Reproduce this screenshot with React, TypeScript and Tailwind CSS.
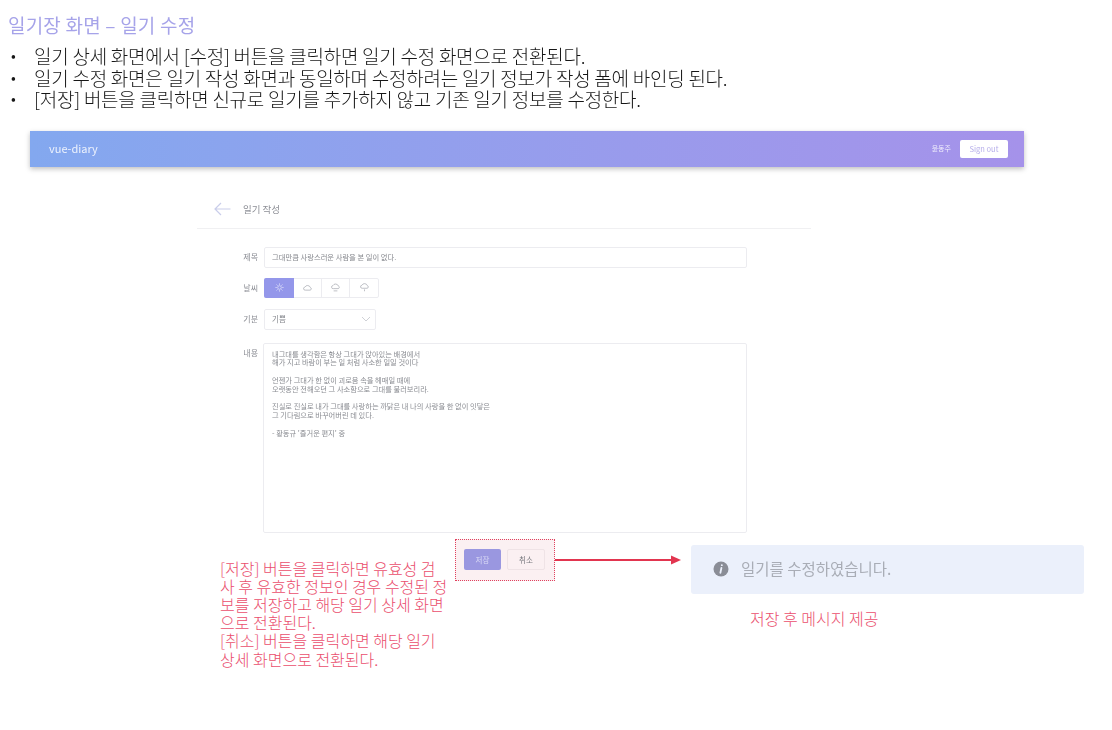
const font = { fontFamily: '"Noto Sans CJK KR", "Noto Sans", sans-serif' };

const bullets = [
  "일기 상세 화면에서 [수정] 버튼을 클릭하면 일기 수정 화면으로 전환된다.",
  "일기 수정 화면은 일기 작성 화면과 동일하며 수정하려는 일기 정보가 작성 폼에 바인딩 된다.",
  "[저장] 버튼을 클릭하면 신규로 일기를 추가하지 않고 기존 일기 정보를 수정한다.",
];

const diary = [
  "내그대를 생각함은 항상 그대가 앉아있는 배경에서",
  "해가 지고 바람이 부는 일 처럼 사소한 일일 것이다",
  "",
  "언젠가 그대가 한 없이 괴로움 속을 헤매일 때에",
  "오랫동안 전해오던 그 사소함으로 그대를 불러보리라.",
  "",
  "진실로 진실로 내가 그대를 사랑하는 까닭은 내 나의 사랑을 한 없이 잇닿은",
  "그 기다림으로 바꾸어버린 데 있다.",
  "",
  "- 황동규 '즐거운 편지' 중",
];

function WeatherIcon({ kind }: { kind: number }) {
  return (
    <svg width="9" height="9" viewBox="0 0 12 12" fill="none" stroke="currentColor" strokeWidth="1">
      {kind === 0 && (
        <>
          <circle cx="6" cy="6" r="2.4" />
          <path d="M6 .5v2M6 9.5v2M.5 6h2M9.5 6h2M2 2l1.5 1.5M8.500 8.500 10 10M2 10l1.500-1.500M8.500 3.500 10 2" />
        </>
      )}
      {kind === 1 && <path d="M3 9.500h6.500a1.800 1.800 0 0 0 .3-3.500A4 4 0 0 0 2.500 5.500 2 2 0 0 0 3 9.500Z" />}
      {kind === 2 && <path d="M3 7.500h6.500a1.800 1.800 0 0 0 .3-3.500A4 4 0 0 0 2.500 3.500 2 2 0 0 0 3 7.500ZM3.500 10.500h5" />}
      {kind === 3 && <path d="M3 7h6.500a1.800 1.800 0 0 0 .3-3.500A4 4 0 0 0 2.500 3 2 2 0 0 0 3 7ZM6 8.500v2.500" />}
    </svg>
  );
}

function FormRow({ label, className, children }: { label: string; className: string; children: React.ReactNode }) {
  return (
    <div className={`flex items-start ${className}`}>
      <span className="w-[67px] pr-[6px] text-right text-[8px] leading-[20px] text-[#8b8d94]">{label}</span>
      {children}
    </div>
  );
}

export default function App() {
  return (
    <div className="h-[730px] w-[1112px] overflow-hidden bg-white" style={font}>
      {/* slide heading */}
      <h1 className="pl-2 pt-[13px] text-[19px] leading-[24px] font-normal tracking-[0.2px] text-[#a6a3e9] blur-[0.3px]">
        일기장 화면 – 일기 수정
      </h1>
      <ul className="mt-[8px] text-[19px] leading-[21.500px] tracking-[-0.250px] text-[#161616] blur-[0.3px]">
        {bullets.map((text) => (
          <li key={text} className="flex">
            <span className="w-[34px] pl-[11px] text-[14px]">•</span>
            <span className="font-light">{text}</span>
          </li>
        ))}
      </ul>

      {/* embedded app screenshot */}
      <div className="ml-[30px] mt-[21px] w-[994px] blur-[0.600px]">
        <header className="flex h-[36px] items-center bg-gradient-to-r from-[#83a8ef] to-[#a592ea] pl-[19px] pr-[16px] shadow-[0_2px_5px_rgba(0,0,0,0.25)]">
          <span className="text-[11px] text-white/85">vue-diary</span>
          <span className="ml-auto mr-[9px] text-[7px] text-white/85">윤동주</span>
          <button className="h-[18px] w-[48px] rounded-[2px] bg-white text-[7.500px] text-[#b6aeea]">Sign out</button>
        </header>

        <main className="ml-[167px] w-[614px]">
          <div className="mt-[35px] flex h-[27px] items-start border-b border-[#f0f0f2] pl-[17px]">
            <svg width="17" height="14" viewBox="0 0 17 14" fill="none" stroke="#c9cdea" strokeWidth="1.200">
              <path d="M16.500 7H1M7 1 1 7l6 6" />
            </svg>
            <span className="ml-[12px] text-[9.500px] leading-[14px] text-[#8d8f96]">일기 작성</span>
          </div>

          <FormRow label="제목" className="mt-[18px]">
            <div className="flex h-[21px] w-[483px] items-center rounded-[2px] border border-[#ececf0] pl-[7px] text-[7.300px] text-[#85878d]">
              그대만큼 사랑스러운 사람을 본 일이 없다.
            </div>
          </FormRow>

          <FormRow label="날씨" className="mt-[10px]">
            <div className="flex h-[20px] rounded-[2px] border border-[#ececf0] text-[#a9abb3]">
              {[0, 1, 2, 3].map((kind) => (
                <span
                  key={kind}
                  className={
                    kind === 0
                      ? "-my-px -ml-px flex h-[20px] w-[30px] items-center justify-center rounded-l-[2px] bg-[#9497ea] text-[#dfe0fa]"
                      : "flex w-[28px] items-center justify-center border-r border-[#ececf0] last:border-r-0"
                  }
                >
                  <WeatherIcon kind={kind} />
                </span>
              ))}
            </div>
          </FormRow>

          <FormRow label="기분" className="mt-[11px]">
            <div className="flex h-[21px] w-[112px] items-center justify-between rounded-[2px] border border-[#ececf0] pl-[7px] pr-[4px] text-[7.500px] text-[#85878d]">
              기쁨
              <svg width="10" height="6" viewBox="0 0 10 6" fill="none" stroke="#c3c5cb" strokeWidth="0.800">
                <path d="M1 1l4 4 4-4" />
              </svg>
            </div>
          </FormRow>

          <FormRow label="내용" className="mt-[13px]">
            <div className="-ml-px h-[190px] w-[484px] rounded-[2px] border border-[#ececf0] pl-[8px] pt-[6px] text-[7.250px] text-[#8a8c92]">
              {diary.map((line, i) => (
                <div key={i} className="h-[8.800px] leading-[8.800px] whitespace-pre">
                  {line}
                </div>
              ))}
            </div>
          </FormRow>
        </main>
      </div>

      {/* annotation row */}
      <div className="ml-[220px] mt-[6px] flex items-start">
        <p className="mt-[20px] w-[235px] text-[16px] leading-[18.200px] font-light text-[#ea4e6d]">
          [저장] 버튼을 클릭하면 유효성 검<br />
          사 후 유효한 정보인 경우 수정된 정<br />
          보를 저장하고 해당 일기 상세 화면<br />
          으로 전환된다.<br />
          [취소] 버튼을 클릭하면 해당 일기<br />
          상세 화면으로 전환된다.
        </p>

        <div className="flex h-[42px] w-[100px] items-center gap-[6px] border border-dotted border-[#e0415e] bg-[#fbf0f2] pl-[8px] blur-[0.400px]">
          <button className="h-[21px] w-[37px] rounded-[2px] bg-[#9a97e0] text-[7.500px] text-[#dcdcf6]">저장</button>
          <button className="h-[21px] w-[38px] rounded-[2px] border border-[#efe3e6] text-[7.500px] text-[#77787e]">취소</button>
        </div>

        <svg width="126" height="12" viewBox="0 0 126 12" className="mt-[15px] shrink-0">
          <path d="M0 6h118" stroke="#e2354f" strokeWidth="2" />
          <path d="M116 1.500l10 4.500-10 4.500Z" fill="#e2354f" />
        </svg>

        <div className="ml-[10px] mt-[6px] w-[393px]">
          <div className="flex h-[49px] items-center rounded-[3px] bg-[#ebf0fb] pl-[22px] text-[15.500px] text-[#a9adb6] blur-[0.400px]">
            <svg width="16" height="16" viewBox="0 0 16 16">
              <circle cx="8" cy="8" r="7.500" fill="#8a8d96" />
              <path d="M8.800 4.200h.1M8.400 7 7.400 11.800" stroke="#ebf0fb" strokeWidth="1.800" strokeLinecap="round" />
            </svg>
            <span className="ml-[12px]">일기를 수정하였습니다.</span>
          </div>
          <p className="mt-[13px] pl-[59px] text-[16px] leading-[22px] font-light text-[#ea4e6d]">
            저장 후 메시지 제공
          </p>
        </div>
      </div>
    </div>
  );
}
